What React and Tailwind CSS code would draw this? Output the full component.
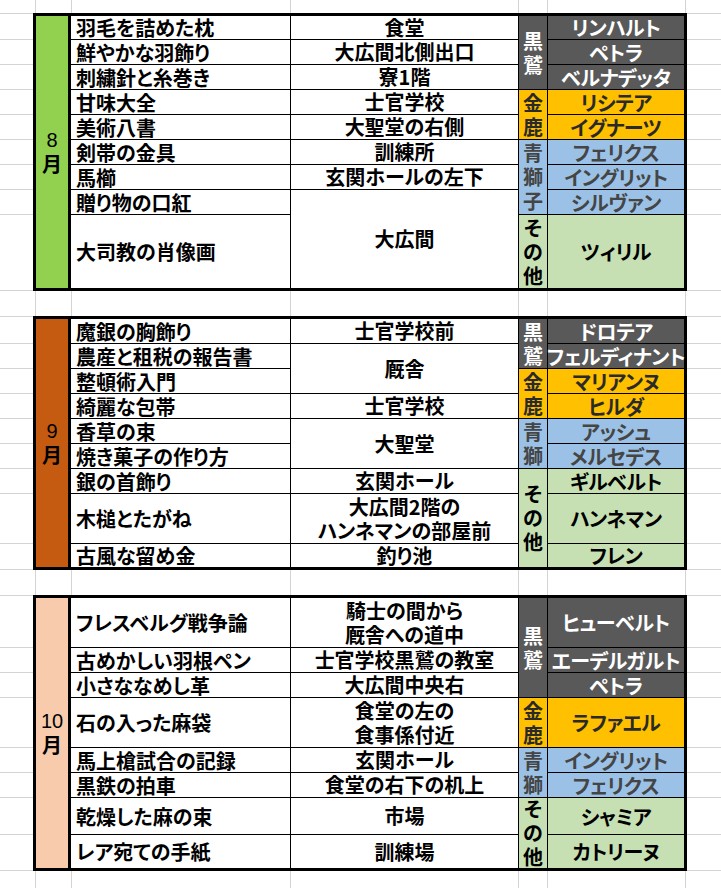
import React from "react";

const JP = "font-['Noto_Sans_CJK_JP',sans-serif] [font-feature-settings:'palt']";

const HOUSE = {
  kuro: { bg: "bg-[#595959]", label: "text-white", name: "text-white" },
  kin: { bg: "bg-[#ffc000]", label: "text-[#2a2a2a]", name: "text-[#2a2a2a]" },
  ao: { bg: "bg-[#9bc2e6]", label: "text-[#454545]", name: "text-[#454545]" },
  etc: { bg: "bg-[#c6e0b4]", label: "text-black", name: "text-black" },
};

const TABLES = [
  {
    month: "8",
    monthBg: "bg-[#92d050]",
    margins: ["h-[26px]", "h-[25px]", "h-[25px]", "h-[25px]", "h-[25px]", "h-[25px]", "h-[25px]", "h-[25px]", "h-[76px]"],
    items: [
      { t: "羽毛を詰めた枕", h: "h-[23px]" },
      { t: "鮮やかな羽飾り", h: "h-[24px]" },
      { t: "刺繍針と糸巻き", h: "h-[24px]" },
      { t: "甘味大全", h: "h-[24px]" },
      { t: "美術八書", h: "h-[24px]" },
      { t: "剣帯の金具", h: "h-[24px]" },
      { t: "馬櫛", h: "h-[24px]" },
      { t: "贈り物の口紅", h: "h-[24px]" },
      { t: "大司教の肖像画", h: "h-[73px]" },
    ],
    locs: [
      { t: ["食堂"], h: "h-[23px]" },
      { t: ["大広間北側出口"], h: "h-[24px]" },
      { t: ["寮1階"], h: "h-[24px]" },
      { t: ["士官学校"], h: "h-[24px]" },
      { t: ["大聖堂の右側"], h: "h-[24px]" },
      { t: ["訓練所"], h: "h-[24px]" },
      { t: ["玄関ホールの左下"], h: "h-[24px]" },
      { t: ["大広間"], h: "h-[98px]" },
    ],
    houses: [
      { l: "黒鷲", k: "kuro", h: "h-[73px]" },
      { l: "金鹿", k: "kin", h: "h-[49px]" },
      { l: "青獅子", k: "ao", h: "h-[74px]" },
      { l: "その他", k: "etc", h: "h-[73px]" },
    ],
    names: [
      { t: "リンハルト", k: "kuro", h: "h-[23px]" },
      { t: "ペトラ", k: "kuro", h: "h-[24px]" },
      { t: "ベルナデッタ", k: "kuro", h: "h-[24px]" },
      { t: "リシテア", k: "kin", h: "h-[24px]" },
      { t: "イグナーツ", k: "kin", h: "h-[24px]" },
      { t: "フェリクス", k: "ao", h: "h-[24px]" },
      { t: "イングリット", k: "ao", h: "h-[24px]" },
      { t: "シルヴァン", k: "ao", h: "h-[24px]" },
      { t: "ツィリル", k: "etc", h: "h-[73px]" },
    ],
  },
  {
    month: "9",
    monthBg: "bg-[#c55a11]",
    margins: ["h-[27px]", "h-[25px]", "h-[25px]", "h-[25px]", "h-[25px]", "h-[25px]", "h-[25px]", "h-[50px]", "h-[26px]"],
    items: [
      { t: "魔銀の胸飾り", h: "h-[24px]" },
      { t: "農産と租税の報告書", h: "h-[24px]" },
      { t: "整頓術入門", h: "h-[24px]" },
      { t: "綺麗な包帯", h: "h-[24px]" },
      { t: "香草の束", h: "h-[24px]" },
      { t: "焼き菓子の作り方", h: "h-[24px]" },
      { t: "銀の首飾り", h: "h-[24px]" },
      { t: "木槌とたがね", h: "h-[49px]" },
      { t: "古風な留め金", h: "h-[23px]" },
    ],
    locs: [
      { t: ["士官学校前"], h: "h-[24px]" },
      { t: ["厩舎"], h: "h-[49px]" },
      { t: ["士官学校"], h: "h-[24px]" },
      { t: ["大聖堂"], h: "h-[49px]" },
      { t: ["玄関ホール"], h: "h-[24px]" },
      { t: ["大広間2階の", "ハンネマンの部屋前"], h: "h-[49px]" },
      { t: ["釣り池"], h: "h-[23px]" },
    ],
    houses: [
      { l: "黒鷲", k: "kuro", h: "h-[49px]" },
      { l: "金鹿", k: "kin", h: "h-[49px]" },
      { l: "青獅", k: "ao", h: "h-[49px]" },
      { l: "その他", k: "etc", h: "h-[98px]" },
    ],
    names: [
      { t: "ドロテア", k: "kuro", h: "h-[24px]" },
      { t: "フェルディナント", k: "kuro", h: "h-[24px]" },
      { t: "マリアンヌ", k: "kin", h: "h-[24px]" },
      { t: "ヒルダ", k: "kin", h: "h-[24px]" },
      { t: "アッシュ", k: "ao", h: "h-[24px]" },
      { t: "メルセデス", k: "ao", h: "h-[24px]" },
      { t: "ギルベルト", k: "etc", h: "h-[24px]" },
      { t: "ハンネマン", k: "etc", h: "h-[49px]" },
      { t: "フレン", k: "etc", h: "h-[23px]" },
    ],
  },
  {
    month: "10",
    monthBg: "bg-[#f8cbad]",
    margins: ["h-[52px]", "h-[25px]", "h-[25px]", "h-[50px]", "h-[25px]", "h-[25px]", "h-[37px]", "h-[36px]"],
    items: [
      { t: "フレスベルグ戦争論", h: "h-[49px]" },
      { t: "古めかしい羽根ペン", h: "h-[24px]" },
      { t: "小さななめし革", h: "h-[24px]" },
      { t: "石の入った麻袋", h: "h-[49px]" },
      { t: "馬上槍試合の記録", h: "h-[24px]" },
      { t: "黒鉄の拍車", h: "h-[24px]" },
      { t: "乾燥した麻の束", h: "h-[36px]" },
      { t: "レア宛ての手紙", h: "h-[33px]" },
    ],
    locs: [
      { t: ["騎士の間から", "厩舎への道中"], h: "h-[49px]" },
      { t: ["士官学校黒鷲の教室"], h: "h-[24px]" },
      { t: ["大広間中央右"], h: "h-[24px]" },
      { t: ["食堂の左の", "食事係付近"], h: "h-[49px]" },
      { t: ["玄関ホール"], h: "h-[24px]" },
      { t: ["食堂の右下の机上"], h: "h-[24px]" },
      { t: ["市場"], h: "h-[36px]" },
      { t: ["訓練場"], h: "h-[33px]" },
    ],
    houses: [
      { l: "黒鷲", k: "kuro", h: "h-[99px]" },
      { l: "金鹿", k: "kin", h: "h-[49px]" },
      { l: "青獅", k: "ao", h: "h-[49px]" },
      { l: "その他", k: "etc", h: "h-[70px]" },
    ],
    names: [
      { t: "ヒューベルト", k: "kuro", h: "h-[49px]" },
      { t: "エーデルガルト", k: "kuro", h: "h-[24px]" },
      { t: "ペトラ", k: "kuro", h: "h-[24px]" },
      { t: "ラファエル", k: "kin", h: "h-[49px]" },
      { t: "イングリット", k: "ao", h: "h-[24px]" },
      { t: "フェリクス", k: "ao", h: "h-[24px]" },
      { t: "シャミア", k: "etc", h: "h-[36px]" },
      { t: "カトリーヌ", k: "etc", h: "h-[33px]" },
    ],
  },
];

function GridBand({ h }) {
  return (
    <div className={`flex ${h}`}>
      <div className="w-[36px] shrink-0 border-r border-[#d4d4d4]" />
      <div className="w-[36px] shrink-0 border-r border-[#d4d4d4]" />
      <div className="w-[219px] shrink-0 border-r border-[#d4d4d4]" />
      <div className="w-[228px] shrink-0 border-r border-[#d4d4d4]" />
      <div className="w-[29px] shrink-0 border-r border-[#d4d4d4]" />
      <div className="w-[138px] shrink-0 border-r border-[#d4d4d4]" />
      <div className="flex-1" />
    </div>
  );
}

function Margin({ cells, className }) {
  return (
    <div className={`flex flex-col border-t border-[#d4d4d4] ${className}`}>
      {cells.map((h, i) => (
        <div key={i} className={`${h} shrink-0 border-b border-[#d4d4d4]`} />
      ))}
    </div>
  );
}

function Table({ data }) {
  return (
    <div className="flex">
      <Margin cells={data.margins} className="w-[33px] shrink-0" />
      <div className="flex w-[654px] shrink-0 border-[3px] border-black">
        <div
          className={`flex w-[35px] shrink-0 flex-col items-center justify-center border-r-[3px] border-black ${data.monthBg}`}
        >
          <span className="font-['Liberation_Sans',sans-serif] text-[20px] leading-[24px] text-black">
            {data.month}
          </span>
          <span className={`${JP} text-[20px] font-bold leading-[24px] text-black`}>月</span>
        </div>
        <div className={`flex gap-px bg-black ${JP} text-[20px] font-bold`}>
          <div className="flex w-[219px] flex-col gap-px">
            {data.items.map((it, i) => (
              <div
                key={i}
                className={`${it.h} flex items-center whitespace-nowrap bg-white pl-[5px] leading-[23px] text-black`}
              >
                {it.t}
              </div>
            ))}
          </div>
          <div className="flex w-[227px] flex-col gap-px">
            {data.locs.map((it, i) => (
              <div
                key={i}
                className={`${it.h} flex flex-col items-center justify-center whitespace-nowrap bg-white text-center leading-[24px] text-black`}
              >
                {it.t.map((line, j) => (
                  <span key={j}>{line}</span>
                ))}
              </div>
            ))}
          </div>
          <div className="flex w-[28px] flex-col gap-px">
            {data.houses.map((it, i) => (
              <div
                key={i}
                className={`${it.h} flex flex-col items-center justify-center ${HOUSE[it.k].bg} ${HOUSE[it.k].label}`}
              >
                {Array.from(it.l).map((c, j) => (
                  <span key={j} className="leading-[24px]">
                    {c}
                  </span>
                ))}
              </div>
            ))}
          </div>
          <div className="flex w-[136px] flex-col gap-px">
            {data.names.map((it, i) => (
              <div
                key={i}
                className={`${it.h} flex items-center justify-center whitespace-nowrap leading-[23px] tracking-[-0.4px] ${HOUSE[it.k].bg} ${HOUSE[it.k].name}`}
              >
                {it.t}
              </div>
            ))}
          </div>
        </div>
      </div>
      <Margin cells={data.margins} className="flex-1" />
    </div>
  );
}

export default function App() {
  return (
    <div className="h-[888px] w-full overflow-hidden bg-white">
      <GridBand h="h-[13px]" />
      <Table data={TABLES[0]} />
      <GridBand h="h-[25px]" />
      <Table data={TABLES[1]} />
      <GridBand h="h-[25px]" />
      <Table data={TABLES[2]} />
      <GridBand h="h-[40px]" />
    </div>
  );
}
